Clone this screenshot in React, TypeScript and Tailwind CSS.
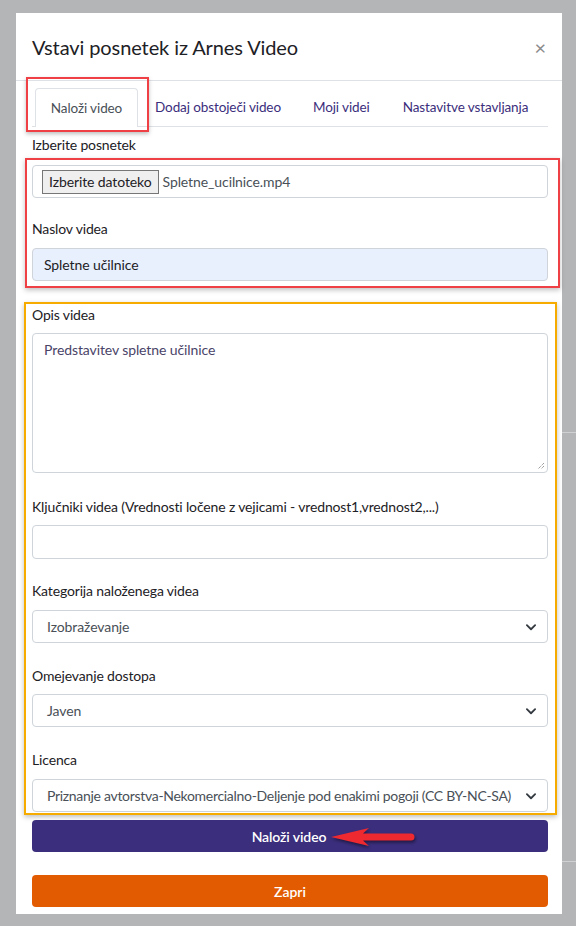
import React from "react";

const font = { fontFamily: "Lato, 'Noto Sans', sans-serif" };

function Chevron() {
  return (
    <svg width="12" height="12" viewBox="0 0 16 16" className="absolute right-[10px] top-1/2 -translate-y-1/2">
      <path d="M2.5 5.5l5.5 5.5 5.5-5.5" fill="none" stroke="#343a40" strokeWidth="2.4" strokeLinecap="round" strokeLinejoin="round" />
    </svg>
  );
}

function Label({ children }: { children: React.ReactNode }) {
  return <div className="h-5 text-[14px] leading-5 tracking-[-0.15px] text-[#1d2125]">{children}</div>;
}

function Select({ value, className = "" }: { value: string; className?: string }) {
  return (
    <div className={`relative h-[33px] rounded border border-[#ced4da] bg-white pl-[14px] text-[14px] leading-[31px] text-[#495057] ${className}`}>
      {value}
      <Chevron />
    </div>
  );
}

export default function App() {
  return (
    <div className="relative min-h-[926px] w-[576px] overflow-hidden bg-[#b3b5b7] pt-[13px]" style={font}>
      <div className="absolute right-0 top-[432px] h-px w-[14px] bg-[#cfd1d3]" />
      <div className="absolute right-0 top-[861px] h-px w-[14px] bg-[#cfd1d3]" />

      <div className="ml-4 w-[546px] bg-white pb-[7px]">
        {/* header */}
        <div className="flex h-[68px] items-center justify-between border-b border-[#dee2e6] pl-4 pr-[14px]">
          <h5 className="text-[20px] tracking-[-0.1px] text-[#1d2125]">Vstavi posnetek iz Arnes Video</h5>
          <span className="mr-[2px] text-[20px] leading-none text-[#8a8a8a]">×</span>
        </div>

        <div className="pl-4 pr-[14px] pt-2">
          {/* tabs */}
          <div className="relative flex h-[38px] items-end border-b border-[#dee2e6] text-[13.5px] tracking-[-0.1px]">
            <div className="ml-[3px] flex h-[39px] w-[103px] translate-y-px items-center justify-center rounded-t border border-b-0 border-[#dee2e6] bg-white text-[#495057]">
              Naloži video
            </div>
            <div className="flex h-[38px] items-center pl-[17px] text-[#3b2e7c]">Dodaj obstoječi video</div>
            <div className="flex h-[38px] items-center pl-[32px] text-[#3b2e7c]">Moji videi</div>
            <div className="flex h-[38px] items-center pl-[33px] text-[#3b2e7c]">Nastavitve vstavljanja</div>
            <div className="pointer-events-none absolute left-[-6px] top-[-12px] h-[55px] w-[123px] border-2 border-[#ef4045] shadow-[0_2px_4px_rgba(0,0,0,0.25)]" />
          </div>

          <div className="mt-[8px]">
            <Label>Izberite posnetek</Label>
          </div>

          {/* red block */}
          <div className="-mr-[12px] ml-[-7px] mt-[3px] border-2 border-[#ef4045] pb-[5px] pl-[5px] pr-[10px] pt-[5px] shadow-[0_2px_5px_rgba(0,0,0,0.25)]">
            <div className="flex h-[33px] items-center rounded border border-[#ced4da] bg-white pl-[9px] text-[14px] tracking-[-0.1px]">
              <div className="flex h-[24px] items-center border border-[#767676] bg-[#efefef] px-[6px] text-[#1d2125]">Izberite datoteko</div>
              <span className="ml-1 text-[#495057]">Spletne_ucilnice.mp4</span>
            </div>
            <div className="mt-[21px]">
              <Label>Naslov videa</Label>
            </div>
            <div className="mt-[9px] flex h-[33px] items-center rounded border border-[#ced4da] bg-[#e8f0fe] pl-[11px] text-[14px] tracking-[-0.1px] text-[#1d2125]">
              Spletne učilnice
            </div>
          </div>

          {/* orange block */}
          <div className="-mr-[9px] ml-[-8px] mt-[14px] border-2 border-[#f6ab00] pb-[1px] pl-[6px] pr-[7px] pt-[1px] shadow-[0_2px_5px_rgba(0,0,0,0.25)]">
            <Label>Opis videa</Label>
            <div className="relative mt-[8px] h-[140px] rounded border border-[#ced4da] bg-white pl-[11px] pt-[6px] text-[14px] leading-5 tracking-[-0.1px] text-[#4a4468]">
              Predstavitev spletne učilnice
              <svg width="8" height="8" viewBox="0 0 8 8" className="absolute bottom-[2px] right-[2px]">
                <path d="M7 1L1 7M7 4L4 7" stroke="#777" strokeWidth="1" strokeDasharray="1 1" />
              </svg>
            </div>

            <div className="mt-[24px]">
              <Label>Ključniki videa (Vrednosti ločene z vejicami - vrednost1,vrednost2,...)</Label>
            </div>
            <div className="mt-[8px] h-[34px] rounded border border-[#ced4da] bg-white" />

            <div className="mt-[22px]">
              <Label>Kategorija naloženega videa</Label>
            </div>
            <Select value="Izobraževanje" className="mt-[9px] tracking-[-0.1px]" />

            <div className="mt-[23px]">
              <Label>Omejevanje dostopa</Label>
            </div>
            <Select value="Javen" className="mt-[8px] tracking-[-0.1px]" />

            <div className="mt-[23px]">
              <Label>Licenca</Label>
            </div>
            <Select value="Priznanje avtorstva-Nekomercialno-Deljenje pod enakimi pogoji (CC BY-NC-SA)" className="mt-[9px] tracking-[-0.3px]" />
          </div>

          {/* buttons */}
          <div className="relative mt-[5px] flex h-[32px] items-center justify-center rounded bg-[#3b2e7c] text-[14px] font-semibold tracking-[-0.1px] text-white">
            <span className="mr-[2px]">Naloži video</span>
            <svg width="88" height="26" viewBox="0 0 88 26" className="absolute left-[297px] top-[4px]" style={{ filter: "drop-shadow(1px 2px 1.5px rgba(0,0,0,0.45))" }}>
              <path d="M34 9.5 H82 a3.5 3.5 0 0 1 0 7 H34 L40 22 L2 13 L40 4 Z" fill="#ee2a30" />
            </svg>
          </div>
          <div className="mt-[23px] flex h-[32px] items-center justify-center rounded bg-[#e35b00] text-[14px] font-semibold text-white">
            Zapri
          </div>
        </div>
      </div>
    </div>
  );
}
